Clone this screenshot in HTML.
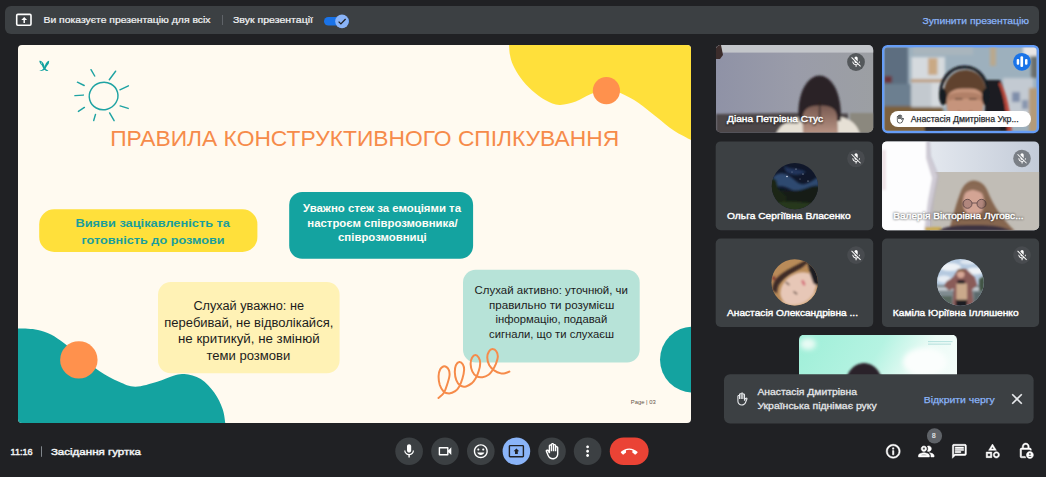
<!DOCTYPE html>
<html lang="uk">
<head>
<meta charset="utf-8">
<title>Meet – Засідання гуртка</title>
<style>
html,body{margin:0;padding:0;background:#202124;overflow:hidden}
body{width:1046px;height:477px;position:relative;font-family:"Liberation Sans",sans-serif}
svg{position:absolute;left:0;top:0;display:block}
text{font-family:"Liberation Sans",sans-serif;white-space:pre}
.ui{fill:#f1f3f4;font-size:9.500px;stroke:#f1f3f4;stroke-width:.22px}
.nm{fill:#fff;font-size:9.400px;stroke:#fff;stroke-width:.4px;paint-order:stroke}
.sh{fill:#000;opacity:.55;font-size:9.400px;stroke:#000;stroke-width:.9px}
</style>
</head>
<body>
<svg width="1046" height="477" viewBox="0 0 1046 477">
<defs>
  <clipPath id="slideClip"><rect x="18" y="45" width="673" height="378" rx="4"/></clipPath>
  <filter id="b1" x="-20%" y="-20%" width="140%" height="140%"><feGaussianBlur stdDeviation="1.2"/></filter>
  <filter id="b15" x="-20%" y="-20%" width="140%" height="140%"><feGaussianBlur stdDeviation="1.700"/></filter>
  <filter id="b2" x="-20%" y="-20%" width="140%" height="140%"><feGaussianBlur stdDeviation="2.5"/></filter>
  <filter id="b4" x="-30%" y="-30%" width="160%" height="160%"><feGaussianBlur stdDeviation="4"/></filter>
  <path id="micoff" d="M19 11h-1.700c0 .740-.160 1.430-.430 2.050l1.230 1.230c.560-.980.900-2.090.900-3.280zm-4.020.170c0-.060.020-.110.020-.170V5c0-1.660-1.340-3-3-3S9 3.340 9 5v.180l5.980 5.990zM4.270 3L3 4.270l6.010 6.010V11c0 1.660 1.330 3 2.990 3 .220 0 .440-.030.650-.080l1.660 1.660c-.710.330-1.500.520-2.310.520-2.760 0-5.300-2.100-5.300-5.100H5c0 3.410 2.720 6.230 6 6.720V21h2v-3.280c.910-.130 1.770-.450 2.540-.900L19.730 21 21 19.730 4.270 3z"/>
</defs>
<rect width="1046" height="477" fill="#202124"/>

<!-- ===== top banner ===== -->
<g id="topbar">
  <rect x="5" y="6" width="1034" height="28" rx="6" fill="#3c4043"/>
  <rect x="16.700" y="14.400" width="14.300" height="10.900" rx="1.200" fill="none" stroke="#fff" stroke-width="1.600"/>
  <path d="M24.200 17 L27.100 19.900 H24.950 V23 H23.450 V19.900 H21.300Z" fill="#fff"/>
  <text class="ui" x="43.500" y="23" textLength="167" lengthAdjust="spacingAndGlyphs">Ви показуєте презентацію для всіх</text>
  <rect x="222" y="15" width="1" height="10" fill="#5f6368"/>
  <text class="ui" x="233" y="23" textLength="80" lengthAdjust="spacingAndGlyphs">Звук презентації</text>
  <rect x="324" y="17" width="25" height="8.600" rx="4.300" fill="#1a73e8"/>
  <circle cx="342" cy="21.400" r="6.800" fill="#8ab4f8"/>
  <path d="M338.600 21.600 l2.300 2.300 l4.700 -4.900" fill="none" stroke="#202124" stroke-width="1.300"/>
  <text x="922.500" y="24" font-size="9.800" fill="#8ab4f8" stroke="#8ab4f8" stroke-width=".25" textLength="106.500" lengthAdjust="spacingAndGlyphs">Зупинити презентацію</text>
</g>

<!-- ===== presented slide ===== -->
<g id="slide" clip-path="url(#slideClip)">
  <rect x="18" y="45" width="673" height="378" fill="#fffaf0"/>
  <path fill="#ffe03b" d="M509.000,45.000 C509.200,46.700 509.300,51.700 510.000,55.000 C510.700,58.300 511.200,61.200 513.000,65.000 C514.800,68.800 517.400,73.500 520.500,77.700 C523.600,81.900 527.600,86.500 531.800,90.300 C536.000,94.100 541.000,97.900 545.600,100.300 C550.200,102.700 554.400,104.700 559.400,104.900 C564.400,105.100 570.500,103.400 575.800,101.600 C581.000,99.800 585.700,96.200 590.900,94.100 C596.100,92.000 602.000,89.100 607.000,89.000 C612.000,88.900 615.700,91.000 621.000,93.300 C626.300,95.600 632.700,99.000 638.600,102.900 C644.500,106.800 650.300,112.100 656.200,116.700 C662.100,121.300 668.000,126.600 673.800,130.500 C679.600,134.400 688.100,138.400 691.000,140.000 L691,45 Z"/>
  <circle cx="606.400" cy="90.700" r="13.600" fill="#ff914d"/>
  <path fill="#14a3a0" d="M18.0,328.6 C19.7,328.6 24.7,328.5 28.0,328.7 C31.3,328.9 34.2,329.0 38.0,330.0 C41.8,331.0 46.6,332.2 51.0,334.5 C55.4,336.8 59.3,339.7 64.5,343.6 C69.7,347.5 76.1,353.4 82.0,358.0 C87.9,362.6 93.8,367.4 100.0,371.4 C106.2,375.4 113.1,379.2 119.0,381.8 C124.9,384.4 129.0,386.7 135.4,386.7 C141.8,386.7 150.8,383.6 157.2,381.8 C163.5,380.0 169.0,377.1 173.5,375.8 C178.0,374.5 179.8,373.6 184.4,374.1 C189.0,374.6 195.8,375.9 200.8,379.0 C205.8,382.1 210.8,387.7 214.4,392.7 C218.0,397.7 220.8,403.9 222.6,409.0 C224.4,414.1 224.9,420.7 225.3,423.0 L18,423 Z"/>
  <circle cx="78.850" cy="359.900" r="18.700" fill="#ff914d"/>
  <circle cx="693" cy="359.600" r="33" fill="#14a3a0"/>

  <!-- tiny logo -->
  <path fill="#14a3a0" d="M39.3,60.8 C39.7,60.8 40.7,60.8 41.4,61.2 C42.0,61.6 42.7,62.3 43.2,63.1 C43.7,63.8 44.0,65.0 44.4,65.8 C44.8,66.7 45.0,67.7 45.5,68.4 C46.0,69.1 46.9,69.6 47.4,70.0 C47.8,70.4 48.5,70.5 48.3,70.7 C48.1,70.8 47.1,71.1 46.5,70.9 C45.8,70.8 45.0,70.3 44.4,69.8 C43.8,69.2 43.2,68.2 42.8,67.5 C42.3,66.7 42.1,65.8 41.6,65.1 C41.1,64.5 40.4,64.0 40.0,63.3 C39.6,62.6 39.4,61.2 39.3,60.8Z"/>
  <path fill="#14a3a0" d="M49.2,60.8 C48.9,60.9 48.0,61.0 47.4,61.5 C46.8,61.9 46.2,62.8 45.8,63.5 C45.3,64.3 45.1,65.1 44.8,65.8 C44.5,66.6 44.4,67.5 43.9,68.1 C43.4,68.8 42.6,69.6 41.8,70.0 C41.1,70.4 39.6,70.5 39.5,70.7 C39.5,70.8 40.8,71.0 41.6,70.9 C42.4,70.8 43.7,70.5 44.4,70.0 C45.1,69.5 45.3,68.8 45.8,68.1 C46.2,67.5 46.6,66.6 47.1,65.8 C47.6,65.1 48.4,64.4 48.8,63.5 C49.1,62.7 49.1,61.2 49.2,60.8Z"/>
  <circle cx="41.500" cy="62.900" r=".5" fill="#fffaf0"/>

  <!-- sun -->
  <g fill="none" stroke="#1fa3a3" stroke-width="1.450" stroke-linecap="round">
    <ellipse cx="103.600" cy="96" rx="14.400" ry="13.700" transform="rotate(-15 103.600 96)"/>
    <path d="M91 69.700 L94.700 76 M115.600 71.200 L109.300 79.700 M128.400 85.800 L119.900 89.800 M120.100 105.900 L128.200 108.400 M109.600 112.900 L114.100 120.700 M95.500 114.400 L93.700 120.500 M84.400 107.400 L78.400 111.400 M74.900 95.600 L83.400 95.100 M77.400 82.200 L84.200 85.500"/>
  </g>

  <text x="110.200" y="146" font-size="21.400" fill="#f68b4a" textLength="509" lengthAdjust="spacingAndGlyphs">ПРАВИЛА КОНСТРУКТИВНОГО СПІЛКУВАННЯ</text>

  <!-- yellow pill -->
  <rect x="39.200" y="209.300" width="218.200" height="42.700" rx="15" fill="#ffe03b"/>
  <g font-weight="700" font-size="11.700" fill="#1b9e9c">
    <text x="75.500" y="227.200" textLength="154.500" lengthAdjust="spacingAndGlyphs">Вияви зацікавленість та</text>
    <text x="81.500" y="244.100" textLength="143" lengthAdjust="spacingAndGlyphs">готовність до розмови</text>
  </g>

  <!-- teal box -->
  <rect x="289.200" y="191.900" width="183.900" height="66.900" rx="13" fill="#14a3a0"/>
  <g font-weight="700" font-size="10.600" fill="#fffdf7">
    <text x="303" y="211.500" textLength="158" lengthAdjust="spacingAndGlyphs">Уважно стеж за емоціями та</text>
    <text x="307.300" y="226.500" textLength="150.500" lengthAdjust="spacingAndGlyphs">настроєм співрозмовника/</text>
    <text x="338" y="241.200" textLength="88.800" lengthAdjust="spacingAndGlyphs">співрозмовниці</text>
  </g>

  <!-- pale yellow box -->
  <rect x="158" y="282" width="181.600" height="91.300" rx="12.700" fill="#fff2b5"/>
  <g font-size="12.500" fill="#1c1c1c">
    <text x="193.400" y="309.700" textLength="110.600" lengthAdjust="spacingAndGlyphs">Слухай уважно: не</text>
    <text x="164.300" y="327" textLength="169" lengthAdjust="spacingAndGlyphs">перебивай, не відволікайся,</text>
    <text x="178" y="343.400" textLength="141.600" lengthAdjust="spacingAndGlyphs">не критикуй, не змінюй</text>
    <text x="206.500" y="360" textLength="83.800" lengthAdjust="spacingAndGlyphs">теми розмови</text>
  </g>

  <!-- mint box -->
  <rect x="463" y="269.700" width="176.700" height="92.800" rx="12.700" fill="#b7e3d8"/>
  <g font-size="10.900" fill="#1c1c1c">
    <text x="474.600" y="293.900" textLength="153.400" lengthAdjust="spacingAndGlyphs">Слухай активно: уточнюй, чи</text>
    <text x="489" y="308.900" textLength="125.200" lengthAdjust="spacingAndGlyphs">правильно ти розумієш</text>
    <text x="495.400" y="323.400" textLength="111.800" lengthAdjust="spacingAndGlyphs">інформацію, подавай</text>
    <text x="489" y="338" textLength="125" lengthAdjust="spacingAndGlyphs">сигнали, що ти слухаєш</text>
  </g>

  <!-- squiggle -->
  <path fill="none" stroke="#f68b4a" stroke-width="2" stroke-linecap="round" d="M438.5,398.0 C439.3,397.2 442.2,395.3 443.6,393.2 C445.1,391.0 446.1,388.0 447.0,385.0 C448.0,382.0 449.3,378.1 449.5,375.5 C449.8,372.8 449.4,370.9 448.5,369.3 C447.7,367.8 445.7,366.2 444.3,366.2 C442.9,366.2 441.2,367.7 440.2,369.3 C439.3,371.0 438.7,373.5 438.6,376.1 C438.5,378.8 439.0,382.4 439.8,385.0 C440.7,387.6 442.1,390.1 443.6,391.5 C445.2,393.0 447.2,393.5 449.1,393.5 C451.0,393.4 453.5,392.3 455.2,391.1 C456.9,390.0 458.1,388.5 459.3,386.4 C460.5,384.2 461.7,380.9 462.5,378.2 C463.3,375.5 464.0,372.3 464.1,370.0 C464.2,367.7 463.7,365.9 462.9,364.5 C462.1,363.2 460.5,362.0 459.3,362.1 C458.2,362.2 456.7,363.6 455.9,365.2 C455.2,366.9 454.8,369.5 454.8,372.0 C454.9,374.5 455.4,378.0 456.3,380.2 C457.2,382.5 458.6,384.7 460.3,385.7 C461.9,386.7 464.3,386.8 466.1,386.4 C468.0,386.0 470.0,384.7 471.6,383.4 C473.2,382.0 474.5,380.3 475.7,378.2 C476.9,376.1 478.1,373.2 478.8,370.7 C479.6,368.2 480.2,365.3 480.2,363.2 C480.2,361.0 479.6,359.1 478.8,357.7 C478.0,356.4 476.5,355.0 475.4,355.0 C474.3,355.0 472.8,356.3 472.0,357.7 C471.2,359.2 470.6,361.6 470.6,363.9 C470.7,366.1 471.3,369.3 472.3,371.4 C473.2,373.4 474.7,375.2 476.4,376.1 C478.1,377.1 480.5,377.5 482.5,377.2 C484.5,377.0 486.9,376.0 488.6,374.8 C490.3,373.6 491.5,371.8 492.7,370.0 C493.9,368.2 495.0,366.0 495.9,363.9 C496.7,361.7 497.7,359.1 497.8,357.0 C497.9,355.0 497.4,352.9 496.5,351.6 C495.7,350.3 493.7,349.0 492.5,349.0 C491.2,349.0 489.8,350.1 488.9,351.6 C488.0,353.0 487.2,355.5 487.3,357.7 C487.3,360.0 488.2,363.1 489.3,365.2 C490.5,367.3 492.2,368.9 494.1,370.3 C496.0,371.6 499.0,372.9 500.9,373.4 C502.8,373.9 504.3,373.4 505.7,373.1 C507.1,372.8 508.8,371.9 509.4,371.6"/>

  <text x="630.800" y="404.100" font-size="5.700" fill="#5f5448" textLength="25" lengthAdjust="spacingAndGlyphs">Page | 03</text>
</g>

<!-- ===== participant tiles ===== -->
<defs>
  <clipPath id="c1"><rect x="715.700" y="45" width="157.500" height="87.500" rx="5"/></clipPath>
  <clipPath id="c2"><rect x="884.500" y="47.500" width="152" height="83.200" rx="3"/></clipPath>
  <clipPath id="c4"><rect x="882" y="141.400" width="157.100" height="88.900" rx="5"/></clipPath>
  <clipPath id="c7"><rect x="799" y="334.700" width="158" height="84" rx="5"/></clipPath>
  <clipPath id="a3"><circle cx="794.900" cy="186.200" r="23.100"/></clipPath>
  <clipPath id="a5"><circle cx="794.700" cy="282.400" r="23.200"/></clipPath>
  <clipPath id="a6"><circle cx="960.400" cy="282.400" r="23.400"/></clipPath>
  <linearGradient id="g1" x1="0" x2="1" y1="0" y2="0"><stop offset="0" stop-color="#8f92a6"/><stop offset=".5" stop-color="#9a9ca9"/><stop offset="1" stop-color="#9c9fa3"/></linearGradient>
  <linearGradient id="gf1" x1="0" x2="0" y1="0" y2="1"><stop offset="0" stop-color="#6e5048"/><stop offset="1" stop-color="#b99585"/></linearGradient>
  <linearGradient id="g4" x1="0" x2="1" y1="0" y2="0"><stop offset="0" stop-color="#f1f4f8"/><stop offset="1" stop-color="#c3cbd8"/></linearGradient>
  <linearGradient id="g7" x1="0" x2="1" y1="0" y2=".35"><stop offset="0" stop-color="#9fefd8"/><stop offset=".5" stop-color="#b5f3e2"/><stop offset=".78" stop-color="#ecfbf6"/><stop offset="1" stop-color="#f4fdfa"/></linearGradient>
</defs>

<!-- tile 1 : Diana -->
<g clip-path="url(#c1)">
  <rect x="716" y="45" width="158" height="88" fill="url(#g1)"/>
  <rect x="716" y="45" width="158" height="7.600" fill="#c3c6ca"/>
  <path d="M716 45 h5 l2 10 l-3 4 h-4z" fill="#3b2c2b"/>
  <g filter="url(#b1)">
    <path d="M716 114 L790 113 L848 113.500 L848 134 L716 134Z" fill="#4d4749"/>
    <rect x="850" y="113" width="26" height="22" fill="#8b887e"/>
    <path d="M776 134 C780 124 790 118 802 116.500 L838 116.500 C850 118 857 124 860 134Z" fill="#e6e0d5"/>
    <path d="M802.500 120 C802.500 108 808 101 820 101 C832 101 837.500 108 837.500 120 L838 134 L803 134Z" fill="url(#gf1)"/>
    <path d="M799 121 C797 108 800 92 806 84 C810 78.500 815 75.600 819.500 75.600 C824 75.600 829 78.500 833 84 C839 92 842 108 840.500 121 L837 121 C838 111 834 105.500 820 105.500 C806 105.500 802 111 803 121Z" fill="#2a2325"/>
    <path d="M819 101 L820.500 101 L821 118 L818.500 118Z" fill="#2a2325" opacity=".6"/>
  </g>
</g>
<circle cx="856" cy="62" r="8.900" fill="#3c4043" fill-opacity=".75"/>
<use href="#micoff" transform="translate(849.60,55.47) scale(.54)" fill="#fff"/>
<text class="sh" x="727" y="122.600" textLength="96" lengthAdjust="spacingAndGlyphs" filter="url(#b1)">Діана Петрівна Стус</text>
<text class="nm" x="727" y="122.200" textLength="96" lengthAdjust="spacingAndGlyphs">Діана Петрівна Стус</text>

<!-- tile 2 : Anastasia (speaking, hand raised) -->
<rect x="882" y="45" width="157.100" height="88.200" rx="5.500" fill="#669df6"/>
<g clip-path="url(#c2)">
  <rect x="883" y="46" width="155" height="87" fill="#9db0bd"/>
  <g filter="url(#b15)">
    <rect x="883" y="46" width="25" height="62" fill="#5d6e80"/>
    <rect x="883" y="84" width="28" height="22" fill="#6c7f90"/>
    <rect x="884" y="76" width="8" height="7" fill="#6a3038"/>
    <rect x="883" y="106" width="60" height="27" fill="#7b603d"/>
    <rect x="911.500" y="57" width="33.500" height="50" fill="#d5dade"/>
    <rect x="911.500" y="83" width="20" height="24" fill="#c3c9cf"/>
    <rect x="928" y="58" width="9.500" height="17" fill="#c9a984"/>
    <rect x="911" y="79.500" width="35" height="2.600" fill="#b58a5c"/>
    <rect x="913" y="46" width="60" height="9" fill="#a9b5bd"/>
    <rect x="990" y="46" width="6" height="20" fill="#b9a98f"/>
    <rect x="1023" y="46" width="15" height="10" fill="#e8e5e5"/><rect x="1031" y="56" width="7" height="22" fill="#6a6e6c"/>
    <rect x="1003" y="78" width="30" height="40" fill="#c3cad2"/><rect x="1012" y="92" width="8" height="10" fill="#7f8eaa"/><rect x="1022" y="100" width="6" height="9" fill="#8795ae"/>
    <rect x="1029" y="88" width="9" height="45" fill="#b39a78"/>
  </g>
  <g filter="url(#b1)">
    <path d="M986 80 L1000 80 C1006 92 1009 112 1010 133 L984 133Z" fill="#1b1b20"/>
    <path d="M1000 82 C1007 92 1010.500 112 1012 133 L1007.500 133 C1006.500 112 1003.500 94 998.500 84Z" fill="#b9473a"/>
    <path d="M941 100 C938 80 950 67 964.500 67 C979 67 990 80 987.500 100" fill="none" stroke="#191b21" stroke-width="3"/>
    <path d="M946 96 C946 84 984 84 984 96 L983 110 C979 118 972 121 965 121 C958 121 951 118 947 110Z" fill="#c6947b"/>
    <path d="M944 104 C941 82 952 70 965 70 C978 70 989 80 986 104 L983 104 C984 94 982 88 966 88.500 C950 88 946 94 947 104Z" fill="#61432f"/>
    <path d="M950 134 C952 124 958 121 965 121 C972 121 978 124 980 134Z" fill="#b88870"/>
    <ellipse cx="943" cy="97" rx="3.600" ry="8.500" fill="#191b21"/>
    <ellipse cx="985.500" cy="97" rx="3.600" ry="8.500" fill="#191b21"/>
    <path d="M948 96 C952 91 978 91 982 96 L982 101 C975 98 955 98 948 101Z" fill="#a87860" opacity=".7"/>
    <path d="M955 99 h7.500 M969 99 h7.500" stroke="#4b3326" stroke-width="1.200"/>
    <path d="M958 111 C962 113.500 968 113.500 972 111" stroke="#8a5045" stroke-width="1" fill="none"/>
    <rect x="925" y="126" width="75" height="8" fill="#2c2c33"/>
  </g>
</g>
<circle cx="1022" cy="61.800" r="8.900" fill="#1a73e8"/>
<g fill="#fff"><rect x="1016.700" y="59.100" width="2.500" height="5.700" rx="1"/><rect x="1020.400" y="56.300" width="2.700" height="10.700" rx="1.100"/><rect x="1025" y="59.100" width="2.500" height="5.700" rx="1"/></g>
<rect x="890" y="111" width="141" height="16" rx="8" fill="#fff"/>
<g transform="translate(904.750,114.400) scale(-.375,.375)" fill="#3c4043"><path d="M21 7c0-1.380-1.120-2.500-2.500-2.500-.170 0-.340.020-.500.050V4c0-1.380-1.120-2.500-2.500-2.500-.230 0-.460.030-.670.090C14.460.660 13.560 0 12.500 0c-1.230 0-2.250.890-2.460 2.060C9.870 2.020 9.690 2 9.500 2 8.120 2 7 3.120 7 4.500v5.890c-.340-.310-.760-.540-1.220-.660L5.010 9.520c-.830-.230-1.700.090-2.190.830-.380.570-.400 1.310-.150 1.950l2.560 6.430C6.490 21.910 9.570 24 13 24c4.420 0 8-3.580 8-8V7zm-2 9c0 3.310-2.690 6-6 6-2.610 0-4.950-1.590-5.910-4.010l-2.600-6.540.530.140c.460.120.830.460 1 .900L7 15h2V4.500c0-.280.220-.500.500-.500s.500.220.500.500V12h2V2.500c0-.280.220-.500.500-.500s.500.220.500.500V12h2V4c0-.280.220-.500.500-.500s.500.220.500.500v8h2V7c0-.280.220-.500.500-.500s.500.220.500.500v9z"/></g>
<text x="910.700" y="122" font-size="8.600" fill="#2b2d30" stroke="#2b2d30" stroke-width=".25" textLength="108" lengthAdjust="spacingAndGlyphs">Анастасія Дмитрівна Укр...</text>

<!-- tile 3 : Olga (avatar) -->
<rect x="715.700" y="141.400" width="157.500" height="88.900" rx="5" fill="#3c4043"/>
<g clip-path="url(#a3)">
  <rect x="770" y="162" width="50" height="50" fill="#10172a"/>
  <g filter="url(#b1)">
    <path d="M772 178 C782 168 790 176 797 182 C805 188 812 180 820 176 L820 192 C810 196 800 194 792 190 C784 186 778 184 772 190Z" fill="#2e4870"/>
    <path d="M784 166 C792 170 800 168 806 172 C800 176 792 176 786 172Z" fill="#22365c"/>
    <path d="M770 192 C780 188 790 192 800 190 C808 188 814 184 820 186 L820 212 L770 212Z" fill="#151c16"/>
    <path d="M770 176 L776 180 L779 190 L786 196 L786 212 L770 212Z" fill="#1a2818"/>
    <path d="M772 204 C785 200 800 202 818 204 L818 212 L772 212Z" fill="#27381f"/>
  </g>
  <g fill="#dfe6f5"><circle cx="787" cy="176.500" r=".8"/><circle cx="796" cy="169" r=".5"/><circle cx="803" cy="174" r=".5"/><circle cx="808" cy="181" r=".5"/><circle cx="792" cy="172" r=".4"/><circle cx="800" cy="179" r=".4"/></g>
</g>
<circle cx="856" cy="158.500" r="8.800" fill="#484b4f"/>
<use href="#micoff" transform="translate(849.60,152.27) scale(.54)" fill="#fff"/>
<text class="nm" x="727" y="219.100" textLength="123.600" lengthAdjust="spacingAndGlyphs">Ольга Сергіївна Власенко</text>

<!-- tile 4 : Valeria -->
<g clip-path="url(#c4)">
  <rect x="882" y="141" width="158" height="90" fill="url(#g4)"/>
  <rect x="930" y="172" width="110" height="60" fill="#c1bdb6"/>
  <g filter="url(#b1)">
    <path d="M882 141 L928 141 L929 156 L937 176 L926 231 L882 231Z" fill="#fdfdfe"/>
    <path d="M926 141 L930 141 L931 156 L939 176 L934 200 L931 231 L924 231 L928 200 L932 178 L926 158Z" fill="#b9b2c0" opacity=".65"/>
    <rect x="882" y="150" width="4" height="40" fill="#e3c9d0" opacity=".5"/>
    <path d="M949 231 C953 215 957 201 961 191 C964 184 969 180.500 973.500 180.500 C979 180.500 985 184 988 192 C993 205 1003 220 1015 231Z" fill="#866650"/>
    <ellipse cx="973.500" cy="202" rx="10.500" ry="14.500" fill="#d3a494"/>
    <path d="M960 200 C960 188 968 184 974 184 C981 184 987 189 987 198 C982 192 976 190 972 190 C966 191 962 195 960 200Z" fill="#8a6a55"/>
    <rect x="925" y="227" width="16" height="4" fill="#c9aa55"/>
    <path d="M938 231 C945 226 955 225 975 225 C995 225 1004 227 1012 231Z" fill="#3a3040"/>
  </g>
  <g fill="#5a3c44" fill-opacity=".35" stroke="#3a2a30" stroke-width=".8" opacity=".8"><circle cx="967.500" cy="203.800" r="4.500"/><circle cx="981.500" cy="203.800" r="4.500"/><path d="M972 203 h5" fill="none"/></g>
</g>
<circle cx="1022" cy="158.500" r="8.800" fill="#5f6368" fill-opacity=".75"/>
<use href="#micoff" transform="translate(1015.60,152.27) scale(.54)" fill="#fff"/>
<text class="sh" x="893.200" y="219.300" textLength="130.400" lengthAdjust="spacingAndGlyphs" filter="url(#b1)">Валерія Вікторівна Луговс...</text>
<text class="nm" x="893.200" y="218.900" textLength="130.400" lengthAdjust="spacingAndGlyphs">Валерія Вікторівна Луговс...</text>

<!-- tile 5 : Anastasia O. (avatar) -->
<rect x="715.700" y="238.500" width="157.500" height="88.400" rx="5" fill="#3c4043"/>
<g clip-path="url(#a5)">
  <rect x="770" y="258" width="50" height="50" fill="#b98b59"/>
  <g filter="url(#b1)">
    <path d="M770 300 L790 302 L820 290 L820 308 L770 308Z" fill="#d6b08a"/>
    <ellipse cx="798.300" cy="288.500" rx="19.500" ry="14.500" transform="rotate(-35 798.300 288.500)" fill="#e7c7b7"/>
    <path d="M806.500 258 L820 258 L820 287 L813.500 283.500 L810.300 274.600 L808.400 265.800Z" fill="#1b1b20"/>
    <path d="M809,262.100 C806,264 804,266 802.700,267.100 C799,269.500 796,271 792.700,272.800 C789,275 786,277 783.900,279 C781,282 779,284 778.200,286 C777.300,289 777,291 777,293.500 L772,290 C772.500,286 773.500,283.500 774.400,281.600 C776,278.500 778.500,276.500 780.700,274.600 C784,272 787,270 790.200,268.400 C794,266.500 797,265 800.200,263.300 C803,261.800 805,260.500 806.500,259.500 Z" fill="#3d2b26"/>
    <ellipse cx="803.400" cy="282.800" rx="1.500" ry="3.200" transform="rotate(-25 803.400 282.800)" fill="#d6747e"/>
    <path d="M785.600 282 l3.800 3 M793.500 291.500 l3.600 2.600" stroke="#4a3630" stroke-width="1.300"/>
    <rect x="772.500" y="276.500" width="2.600" height="3.400" fill="#7a2a2a"/>
  </g>
</g>
<circle cx="856" cy="255.100" r="8.800" fill="#484b4f"/>
<use href="#micoff" transform="translate(849.60,248.87) scale(.54)" fill="#fff"/>
<text class="nm" x="727" y="315.500" textLength="131" lengthAdjust="spacingAndGlyphs">Анастасія Олександрівна ...</text>

<!-- tile 6 : Kamila (avatar) -->
<rect x="882" y="238.500" width="157.100" height="88.400" rx="5" fill="#3c4043"/>
<g clip-path="url(#a6)">
  <rect x="936" y="258" width="50" height="50" fill="#b5c9df"/>
  <g filter="url(#b1)">
    <ellipse cx="950" cy="267" rx="11" ry="4" fill="#eef2f6"/>
    <ellipse cx="975" cy="271" rx="9" ry="3.500" fill="#eef2f6"/>
    <ellipse cx="944" cy="279" rx="7" ry="3.500" fill="#e6ecf3"/>
    <ellipse cx="968" cy="262" rx="8" ry="2.500" fill="#dfe7f0"/>
    <rect x="936" y="285" width="50" height="24" fill="#7f8b90"/>
    <rect x="936" y="287.500" width="50" height="3" fill="#c9d0d6"/>
    <rect x="936" y="296" width="16" height="12" fill="#59675f"/>
    <path d="M979 279 l7 -4 v16 h-7z" fill="#435545"/>
    <rect x="974" y="292" width="12" height="16" fill="#5b6b6c"/>
    <path d="M957 270.900 L953.300 277.200 L946.400 281.600 L944.100 286 L948.900 290.400 L953.600 288.500 L952.400 308 L974 308 L972.100 289.700 L977.200 285.300 L974.700 277.200 L968.400 270.900 L966.500 269 L958 269Z" fill="#8a5b59"/>
    <rect x="956.400" y="283.400" width="10.700" height="16.600" fill="#caa98b"/>
    <circle cx="960.800" cy="274.200" r="3.700" fill="#d7a796"/>
    <path d="M956.500 273.500 C956.500 267.500 965 267.500 965.200 273.500 C963 270.500 959 270.500 956.500 273.500Z" fill="#7a5535"/>
    <rect x="957" y="280.300" width="8.200" height="3.200" rx="1.600" fill="#1b1b21"/>
    <rect x="955.800" y="299.800" width="11.300" height="8" fill="#1b1b21"/>
  </g>
</g>
<circle cx="1022" cy="255.100" r="8.800" fill="#484b4f"/>
<use href="#micoff" transform="translate(1015.60,248.87) scale(.54)" fill="#fff"/>
<text class="nm" x="892.800" y="315.500" textLength="125.800" lengthAdjust="spacingAndGlyphs">Каміла Юріївна Ілляшенко</text>

<!-- tile 7 : partially hidden -->
<g clip-path="url(#c7)">
  <rect x="799" y="335" width="158" height="90" fill="url(#g7)"/>
  <g filter="url(#b2)"><ellipse cx="925" cy="362" rx="22" ry="14" fill="#fbfefd"/><ellipse cx="808" cy="344" rx="8" ry="6" fill="#e8fbf4"/></g>
  <ellipse cx="864" cy="386" rx="19" ry="23" fill="#2a2129" filter="url(#b1)"/>
  <rect x="928" y="341.300" width="24.500" height=".8" fill="#3aa7a7" opacity=".4"/><rect x="928" y="343.700" width="23" height=".8" fill="#3aa7a7" opacity=".4"/>
</g>

<!-- ===== hand-raise notification ===== -->
<g id="toast">
  <rect x="724" y="374.200" width="309.600" height="49.400" rx="6" fill="#3c4043"/>
  <g transform="translate(748.900,392.400) scale(-.55,.55)" fill="#e8eaed"><path d="M21 7c0-1.380-1.120-2.500-2.500-2.500-.170 0-.340.020-.500.050V4c0-1.380-1.120-2.500-2.500-2.500-.230 0-.460.030-.670.090C14.460.660 13.560 0 12.500 0c-1.230 0-2.250.890-2.460 2.060C9.870 2.020 9.690 2 9.500 2 8.120 2 7 3.120 7 4.500v5.890c-.340-.310-.760-.540-1.220-.660L5.010 9.520c-.830-.230-1.700.090-2.190.830-.380.570-.400 1.310-.150 1.950l2.560 6.430C6.490 21.910 9.570 24 13 24c4.420 0 8-3.580 8-8V7zm-2 9c0 3.310-2.690 6-6 6-2.610 0-4.950-1.590-5.910-4.010l-2.600-6.540.530.140c.460.120.830.460 1 .900L7 15h2V4.500c0-.280.220-.500.500-.500s.500.220.500.500V12h2V2.500c0-.280.220-.500.500-.500s.500.220.500.500V12h2V4c0-.280.220-.500.500-.500s.500.220.500.500v8h2V7c0-.280.220-.500.500-.500s.500.220.500.500v9z"/></g>
  <g font-size="9.200" fill="#e3e5e8" stroke="#e3e5e8" stroke-width=".3">
    <text x="757.400" y="395.400" textLength="99.600" lengthAdjust="spacingAndGlyphs">Анастасія Дмитрівна</text>
    <text x="757.400" y="408.900" textLength="119.300" lengthAdjust="spacingAndGlyphs">Українська піднімає руку</text>
  </g>
  <text x="923.800" y="402.500" font-size="9.300" fill="#8ab4f8" stroke="#8ab4f8" stroke-width=".25" textLength="70.900" lengthAdjust="spacingAndGlyphs">Відкрити чергу</text>
  <path d="M1012.200 394.200 l9.600 9.600 M1021.800 394.200 l-9.600 9.600" stroke="#e8eaed" stroke-width="1.600" fill="none"/>
</g>

<!-- ===== bottom control bar ===== -->
<g id="bottombar">
  <text x="10.500" y="454.600" font-size="9.800" fill="#f1f3f4" stroke="#f1f3f4" stroke-width=".45" textLength="22.100" lengthAdjust="spacingAndGlyphs">11:16</text>
  <rect x="41" y="446.300" width="1" height="10.500" fill="#80868b"/>
  <text x="50.900" y="454.600" font-size="9.800" fill="#f1f3f4" stroke="#f1f3f4" stroke-width=".45" textLength="90.100" lengthAdjust="spacingAndGlyphs">Засідання гуртка</text>

  <g fill="#3c4043">
    <circle cx="409.100" cy="451.200" r="13.800"/><circle cx="445" cy="451.200" r="13.800"/><circle cx="480.800" cy="451.200" r="13.800"/>
    <circle cx="552" cy="451.200" r="13.800"/><circle cx="587.600" cy="451.200" r="13.800"/>
  </g>
  <circle cx="516.400" cy="451.200" r="13.800" fill="#8ab4f8"/>
  <rect x="609.800" y="437.400" width="38.800" height="27.600" rx="13.800" fill="#ea4335"/>
  <g fill="#fff">
    <path transform="translate(400.700,442.800) scale(.7)" d="M12 14c1.660 0 2.990-1.340 2.990-3L15 5c0-1.660-1.340-3-3-3S9 3.340 9 5v6c0 1.660 1.340 3 3 3zm5.300-3c0 3-2.540 5.100-5.300 5.100S6.700 14 6.700 11H5c0 3.410 2.720 6.230 6 6.720V21h2v-3.280c3.280-.480 6-3.300 6-6.720h-1.700z"/>
    <path transform="translate(436.600,442.800) scale(.7)" d="M15 8v8H5V8h10m1-2H4c-.550 0-1 .450-1 1v10c0 .550.450 1 1 1h12c.550 0 1-.450 1-1v-3.500l4 4v-11l-4 4V7c0-.550-.450-1-1-1z"/>
    <path transform="translate(472.400,442.800) scale(.7)" d="M11.990 2C6.470 2 2 6.480 2 12s4.470 10 9.990 10C17.520 22 22 17.520 22 12S17.520 2 11.990 2zM12 20c-4.420 0-8-3.580-8-8s3.580-8 8-8 8 3.580 8 8-3.580 8-8 8zm3.500-9c.830 0 1.500-.670 1.500-1.500S16.330 8 15.500 8 14 8.670 14 9.500s.670 1.500 1.500 1.500zm-7 0c.830 0 1.500-.670 1.500-1.500S9.330 8 8.500 8 7 8.670 7 9.500 7.670 11 8.500 11zm3.500 6.500c2.330 0 4.310-1.460 5.110-3.500H6.890c.800 2.040 2.780 3.500 5.110 3.500z"/>
    <path transform="translate(543.900,442.900) scale(.69)" d="M21 7c0-1.380-1.120-2.500-2.500-2.500-.170 0-.340.020-.500.050V4c0-1.380-1.120-2.500-2.500-2.500-.230 0-.460.030-.670.090C14.460.660 13.560 0 12.500 0c-1.230 0-2.250.890-2.460 2.060C9.870 2.020 9.690 2 9.500 2 8.120 2 7 3.120 7 4.500v5.890c-.340-.310-.760-.540-1.220-.660L5.010 9.520c-.830-.230-1.700.090-2.190.830-.380.570-.400 1.310-.150 1.950l2.560 6.430C6.490 21.910 9.570 24 13 24c4.420 0 8-3.580 8-8V7zm-2 9c0 3.310-2.690 6-6 6-2.610 0-4.950-1.590-5.910-4.010l-2.600-6.540.530.140c.460.120.830.460 1 .900L7 15h2V4.500c0-.280.220-.500.500-.500s.500.220.500.500V12h2V2.500c0-.280.220-.500.500-.500s.500.220.500.500V12h2V4c0-.280.220-.500.500-.500s.500.220.500.500v8h2V7c0-.280.220-.500.500-.500s.500.220.500.500v9z"/>
    <path transform="translate(578.900,442.500) scale(.725)" d="M12 8c1.100 0 2-.900 2-2s-.900-2-2-2-2 .900-2 2 .900 2 2 2zm0 2c-1.100 0-2 .900-2 2s.900 2 2 2 2-.900 2-2-.900-2-2-2zm0 6c-1.100 0-2 .900-2 2s.900 2 2 2 2-.900 2-2-.900-2-2-2z"/>
    <path transform="translate(620.800,443.500) scale(.7)" d="M12 9c-1.600 0-3.150.250-4.600.720v3.100c0 .390-.230.740-.560.900-.980.490-1.870 1.120-2.660 1.850-.180.180-.430.280-.700.280-.280 0-.530-.110-.710-.290L.290 13.080c-.180-.170-.290-.420-.290-.700 0-.280.110-.530.290-.710C3.340 8.780 7.460 7 12 7s8.660 1.780 11.710 4.670c.180.180.290.430.290.710 0 .280-.110.530-.290.710l-2.480 2.480c-.180.180-.430.290-.710.290-.270 0-.520-.110-.700-.280-.790-.740-1.690-1.360-2.670-1.850-.330-.160-.560-.500-.560-.900v-3.100C15.150 9.250 13.600 9 12 9z"/>
  </g>
  <path fill="#202124" transform="translate(508,442.800) scale(.7)" d="M21 3H3c-1.110 0-2 .890-2 2v14c0 1.110.890 2 2 2h18c1.110 0 2-.890 2-2V5c0-1.110-.890-2-2-2zm0 16.020H3V4.980h18v14.040zM10 12H8l4-4 4 4h-2v4h-4v-4z"/>

  <g fill="#fff" stroke="#fff" stroke-width=".7" stroke-linejoin="round">
    <path transform="translate(884.800,442.900) scale(.7)" d="M11 7h2v2h-2zm0 4h2v6h-2zm1-9C6.480 2 2 6.480 2 12s4.480 10 10 10 10-4.480 10-10S17.520 2 12 2zm0 18c-4.410 0-8-3.590-8-8s3.590-8 8-8 8 3.590 8 8-3.590 8-8 8z"/>
    <path transform="translate(916.900,442.100) scale(.78)" d="M9 13.750c-2.340 0-7 1.170-7 3.500V19h14v-1.750c0-2.330-4.660-3.500-7-3.500zM4.340 17c.840-.580 2.870-1.250 4.660-1.250s3.820.670 4.660 1.250H4.340zM9 12c1.930 0 3.500-1.570 3.500-3.500S10.930 5 9 5 5.500 6.570 5.500 8.500 7.070 12 9 12zm0-5c.830 0 1.500.670 1.500 1.500S9.830 10 9 10s-1.500-.670-1.500-1.500S8.170 7 9 7zm7.040 6.810c1.160.840 1.960 1.960 1.960 3.440V19h4v-1.750c0-2.020-3.500-3.170-5.960-3.440zM15 12c1.930 0 3.500-1.570 3.500-3.500S16.930 5 15 5c-.540 0-1.040.130-1.500.350.630.890 1 1.980 1 3.150s-.370 2.260-1 3.150c.460.220.960.350 1.500.350z"/>
    <path transform="translate(951,442.900) scale(.7)" d="M4 4h16v12H5.170L4 17.170V4m0-2c-1.100 0-1.990.900-1.990 2L2 22l4-4h14c1.100 0 2-.900 2-2V4c0-1.100-.900-2-2-2H4zm2 10h8v2H6v-2zm0-3h12v2H6V9zm0-3h12v2H6V6z"/>
    <path transform="translate(984.100,442.600) scale(.7)" d="M12 2l-5.500 9h11L12 2zm0 3.840L13.930 9h-3.870L12 5.840zM17.500 13c-2.490 0-4.500 2.010-4.500 4.500s2.010 4.500 4.500 4.500 4.500-2.010 4.500-4.500-2.010-4.500-4.500-4.500zm0 7c-1.380 0-2.500-1.120-2.500-2.500s1.120-2.500 2.500-2.500 2.500 1.120 2.500 2.500-1.120 2.500-2.500 2.500zM3 21.500h8v-8H3v8zm2-6h4v4H5v-4z"/>
    <path transform="translate(1017.300,442.400) scale(.7)" d="M6 20V10h12v1c.700 0 1.370.100 2 .290V10c0-1.100-.900-2-2-2h-1V6c0-2.760-2.240-5-5-5S7 3.240 7 6v2H6c-1.100 0-2 .900-2 2v10c0 1.100.900 2 2 2h6.260c-.420-.600-.750-1.280-.970-2H6zM9 6c0-1.660 1.340-3 3-3s3 1.340 3 3v2H9V6z M18 13c-2.760 0-5 2.240-5 5s2.240 5 5 5 5-2.240 5-5-2.240-5-5-5zm0 2c.830 0 1.500.670 1.500 1.500S18.830 18 18 18s-1.500-.670-1.500-1.500.670-1.500 1.500-1.500zm0 6c-1.030 0-1.940-.520-2.480-1.320.730-.420 1.570-.680 2.480-.680s1.750.260 2.480.680c-.540.800-1.450 1.320-2.480 1.320z"/>
  </g>
  <circle cx="934.500" cy="435.800" r="7.600" fill="#5f6368"/>
  <text x="932" y="438.100" font-size="6.500" fill="#e8eaed" stroke="#e8eaed" stroke-width=".2">8</text>
</g>

</svg>
</body>
</html>
